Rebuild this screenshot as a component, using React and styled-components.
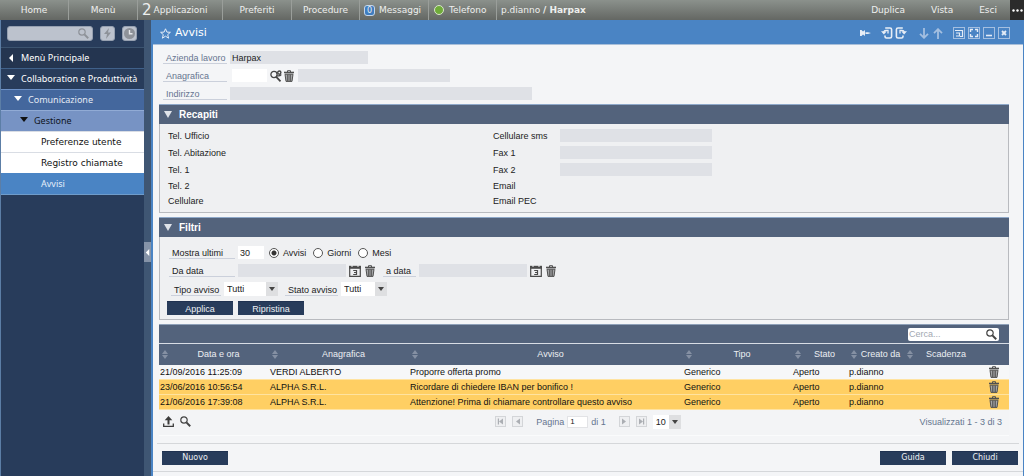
import React from 'react';
import styled, { createGlobalStyle } from 'styled-components';

const GlobalStyle = createGlobalStyle`
  *, *::before, *::after { box-sizing: border-box; }
  body {
    margin: 0;
    background: #3f5673;
    font-family: "Liberation Sans", Arial, sans-serif;
    font-size: 9px;
    line-height: 12px;
    color: #222;
  }
  button, input, select { font: inherit; color: inherit; margin: 0; border-radius: 0; }
  button { padding: 0; border: 0; background: none; cursor: pointer; }
  a { color: inherit; text-decoration: none; }
  svg { display: block; flex: none; }
`;

const ui = '"DejaVu Sans", Verdana, sans-serif';
const uiNarrow = '"Noto Sans", "Open Sans", sans-serif';

const Page = styled.div`
  min-height: 100vh;
  display: flex;
  flex-direction: column;
`;

/* ---------- top bar ---------- */
const TopBar = styled.nav`
  display: flex;
  height: 20px;
  font-family: ${ui};
  color: #eeefee;
  background: linear-gradient(#8b918c, #646763);
`;
const TopItem = styled.a`
  display: flex;
  align-items: center;
  justify-content: ${(p) => (p.$start ? 'flex-start' : 'center')};
  gap: ${(p) => p.$gap || 4}px;
  width: ${(p) => p.$width || 69}px;
  padding: 0 4px;
  border-right: 1px solid #9a9e9a;
  white-space: nowrap;
`;
const TopAction = styled.a`
  display: flex;
  align-items: center;
  padding: 0 13px;
`;
const User = styled.span`
  flex: 1;
  padding: 4px;
  white-space: nowrap;
`;
const Count = styled.span`
  font-size: 15px;
  line-height: 20px;
`;
const Badge = styled.span`
  width: 11px;
  height: 11px;
  border: 1px solid #c4d6ea;
  border-radius: 3px;
  background: #3f7dc0;
  font-size: 8px;
  line-height: 9px;
  text-align: center;
`;
const Led = styled.span`
  width: 10px;
  height: 10px;
  margin: 0 1px;
  border: 1px solid #d9e6c9;
  border-radius: 50%;
  background: #70ab3a;
`;
const More = styled.button`
  width: 14px;
  display: grid;
  place-items: center;
  background: #2b2b2b;
`;

/* ---------- side menu ---------- */
const Main = styled.div`
  flex: 1;
  display: flex;
`;
const Sidebar = styled.aside`
  width: 144px;
  flex: none;
  border-left: 1px solid #5c7ea6;
  background: #283c5b;
`;
const SideTools = styled.div`
  display: flex;
  align-items: center;
  gap: 7px;
  height: 27px;
  padding: 0 6px;
`;
const SideSearch = styled.label`
  display: flex;
  align-items: center;
  width: 86px;
  height: 15px;
  padding-right: 3px;
  border: 1px solid #96a0b0;
  border-radius: 3px;
  background: #bcc2cd;
  input {
    flex: 1;
    min-width: 0;
    height: 12px;
    border: 0;
    background: none;
    outline: 0;
  }
`;
const SideButton = styled.button`
  display: grid;
  place-items: center;
  width: 15px;
  height: 15px;
  border: 1px solid #96a0b0;
  border-radius: 3px;
  background: #bcc2cd;
`;
const levels = {
  root: 'color:#fff;background:#243550;border-color:#3c5470;padding-left:6px;',
  area: 'color:#fff;background:#283c5b;border-color:#40618a;padding-left:6px;',
  group: 'color:#e4ebf5;background:#44679d;border-color:#6d91c6;padding-left:13px;',
  folder: 'color:#10151d;background:#7793c4;border-color:#91abd5;padding-left:19px;',
  leaf: `color:#111;background:#fff;border-color:#d9dde4;padding-left:40px;font-family:${ui};`,
  active: `color:#e4eefa;background:#4a84c4;border-color:#4a84c4;padding-left:40px;`,
};
const MenuItem = styled.a`
  display: flex;
  align-items: center;
  gap: 6px;
  height: 21px;
  border-top: 1px solid;
  font-family: ${uiNarrow};
  white-space: nowrap;
  ${(p) => levels[p.$level]}
`;
const MenuArrow = styled.span`
  padding-bottom: 3px;
`;
const MenuEnd = styled.div`
  height: 1px;
  background: #6f9ccb;
`;
const Splitter = styled.div`
  width: 7px;
  flex: none;
  display: flex;
  align-items: center;
  padding-top: 8px;
  background: #3f5673;
`;
const Collapse = styled.button`
  width: 7px;
  height: 20px;
  display: grid;
  place-items: center;
  background: #8593a8;
`;

/* ---------- window ---------- */
const Window = styled.main`
  flex: 1;
  min-width: 0;
  display: flex;
  flex-direction: column;
  border: solid #4a84c4;
  border-width: 0 1px 0 2px;
  background: #f4f5f7;
`;
const TitleBar = styled.header`
  display: flex;
  align-items: center;
  height: 25px;
  padding: 2px 13px 0 7px;
  border-bottom: 1px solid #a9bfd9;
  background: #4a84c4;
  color: #fff;
`;
const Title = styled.h1`
  flex: 1;
  margin: 0 0 0 4px;
  font: 11px/16px ${ui};
`;
const WindowTools = styled.div`
  display: flex;
  align-items: center;
  gap: ${(p) => p.$gap}px;
  margin-left: ${(p) => p.$before || 0}px;
`;
const Content = styled.div`
  flex: 1;
  padding: 6px 14px 0 6px;
`;

const Heading = styled.section`
  display: flex;
  flex-direction: column;
  gap: 5px;
  padding-left: 4px;
  color: #65748f;
`;
const Row = styled.div`
  display: flex;
  align-items: center;
  gap: ${(p) => p.$gap || 3}px;
  padding-left: ${(p) => p.$indent || 0}px;
`;
const Group = styled(Row)`
  margin-left: ${(p) => p.$before}px;
`;
const Label = styled.label`
  width: ${(p) => p.$width || 64}px;
  height: 13px;
  padding: 1px 0 0 3px;
  border-bottom: 1px solid #cbd0db;
  white-space: nowrap;
`;
const Field = styled.input`
  && { margin-left: ${(p) => p.$before || 0}px; }
  width: ${(p) => p.$width}px;
  height: 13px;
  padding: 0 2px;
  border: 0;
  background: ${(p) => (p.readOnly ? '#dfe1e6' : '#fff')};
  color: #222;
  outline: 0;
`;
const IconButton = styled.button`
  display: grid;
  place-items: center;
  width: 12px;
  height: 13px;
`;

const Panel = styled.section`
  margin-top: 4px;
  border: 1px solid #b8babf;
  background: #eff0f2;
`;
const PanelTitle = styled.h2`
  display: flex;
  align-items: center;
  gap: 7px;
  height: 20px;
  margin: -1px -1px 0;
  padding-left: 5px;
  border-top: 1px solid #8ea8c9;
  background: #53637c;
  color: #fff;
  font: bold 10px/12px "Liberation Sans", Arial, sans-serif;
`;
const Contacts = styled.div`
  display: grid;
  grid-template-columns: 325px 1fr;
  padding: 3px 8px 4px;
`;
const ContactRow = styled.div`
  display: flex;
  align-items: center;
  height: ${(p) => (p.$short ? 15 : 17)}px;
  label, span { width: 67px; }
`;
const Filters = styled.form`
  display: flex;
  flex-direction: column;
  gap: 5px;
  padding: 9px 7px 4px;
`;
const Choice = styled.label`
  display: flex;
  align-items: center;
  gap: 4px;
  margin: 0 2px;
  input {
    appearance: none;
    width: 10px;
    height: 10px;
    border: 1px solid #555;
    border-radius: 50%;
    background: #fff;
  }
  input:checked { background: radial-gradient(#333 0 2px, #fff 3px); }
`;
const SelectBox = styled.span`
  display: inline-grid;
  width: ${(p) => p.$width}px;
  height: 14px;
  background: #fff;
  color: #222;
  > * { grid-area: 1 / 1; }
  select {
    appearance: none;
    width: 100%;
    height: 14px;
    padding: 0 3px;
    border: 0;
    background: none;
    outline: 0;
  }
`;
const SelectArrow = styled.span`
  justify-self: end;
  display: grid;
  place-items: center;
  width: 12px;
  height: 14px;
  background: #dedfe1;
  pointer-events: none;
`;
const Button = styled.button`
  width: 66px;
  height: 14px;
  border-top: 1px solid #1f3150;
  background: #283c5b;
  color: #edf0f4;
  font-family: ${(p) => (p.$wide ? ui : 'inherit')};
  font-size: ${(p) => (p.$wide ? 8 : 9)}px;
  line-height: 12px;
`;

/* ---------- list ---------- */
const ListBar = styled.div`
  display: flex;
  justify-content: flex-end;
  align-items: center;
  height: 19px;
  margin-top: 4px;
  padding: 0 10px;
  border-top: 1px solid #8ea0b8;
  background: #53637c;
`;
const ListSearch = styled.label`
  display: flex;
  align-items: center;
  width: 91px;
  height: 13px;
  padding-right: 2px;
  border-radius: 2px;
  background: #fff;
  input {
    flex: 1;
    min-width: 0;
    height: 13px;
    padding: 0 1px;
    border: 0;
    background: none;
    outline: 0;
  }
  input::placeholder { color: #a2a8b2; }
`;
const Table = styled.table`
  width: 100%;
  table-layout: fixed;
  border-collapse: collapse;
  th {
    height: 21px;
    padding: 0 0 0 3px;
    border-top: 1px solid #d8dde5;
    background: #53637c;
    color: #eceff3;
    font-weight: normal;
  }
  td {
    height: 15px;
    padding: 0 1px;
    border-bottom: 1px solid #ffe3a0;
    line-height: 14px;
    white-space: nowrap;
    overflow: hidden;
  }
  td button { width: 27px; height: 12px; }
`;
const ListRow = styled.tr`
  background: ${(p) => (p.$unread ? '#ffcf63' : '#f6f7f8')};
  color: #111;
`;
const Head = styled.div`
  display: flex;
  align-items: center;
  span { flex: 1; text-align: center; }
`;
const Pager = styled.div`
  display: grid;
  grid-template-columns: 1fr auto 1fr;
  height: 26px;
  padding: 0 7px 2px 3px;
  color: #65748f;
  background: #f3f4f6;
  border-bottom: 1px solid #fafbfc;
`;
const PageButton = styled.button`
  display: grid;
  place-items: center;
  width: 11px;
  height: 11px;
  border: 1px solid #d3d5d8;
  background: #eeeff1;
`;
const PageText = styled.label`
  display: flex;
  align-items: center;
  gap: 3px;
  margin: 0 7px;
  input {
    width: 21px;
    height: 12px;
    padding: 0 2px;
    border: 1px solid #e2e3e6;
    background: #fff;
    color: #222;
    font-size: 8px;
  }
`;
const Summary = styled.span`
  justify-self: end;
  align-self: center;
`;
const Footer = styled.footer`
  display: flex;
  gap: 6px;
  align-items: center;
  height: 28px;
  margin: 0 4px;
  padding: 0 1px 0 5px;
  border-top: 1px solid #d5d7da;
`;
const Spacer = styled.span`
  flex: 1;
`;
const Bottom = styled.div`
  height: 5px;
  border-top: 1px solid #d5d7da;
`;

/* ---------- icons ---------- */
const Icon = ({ w = 12, h = w, box = `0 0 ${w} ${h}`, color, children, ...rest }) => (
  <svg width={w} height={h} viewBox={box} fill="none" color={color} stroke="currentColor" aria-hidden="true" {...rest}>
    {children}
  </svg>
);
const Down = ({ color = '#fff', w = 8, h = 5 }) => (
  <Icon w={w} h={h} stroke="none"><path d={`M0 0H${w}L${w / 2} ${h}Z`} fill={color} /></Icon>
);
const Left = ({ w = 8, h = 8 }) => (
  <Icon w={w} h={h} box="0 0 8 8" stroke="none"><path d="M6 0V8L2 4Z" fill="#fff" /></Icon>
);
const Lens = ({ color = '#444', w = 11 }) => (
  <Icon w={w} box="0 0 11 11" color={color}>
    <circle cx="4" cy="4" r="3.2" strokeWidth="1.2" />
    <path d="M6.4 6.4L10.2 10.2" strokeWidth="2" />
  </Icon>
);
const Trash = () => (
  <Icon w={10} h={12} color="#505050">
    <path d="M0 2.5H10" strokeWidth="1.6" />
    <path d="M3.5 2V.7H6.5V2" />
    <path d="M1 4.2L2 11.400H8L9 4.200Z" fill="#a5a6a8" />
    <path d="M3.500 4.500V11M5 4.500V11M6.500 4.500V11" strokeWidth=".8" />
  </Icon>
);
const PersonLens = () => (
  <Icon w={12} color="#444">
    <circle cx="4" cy="4.500" r="3.100" strokeWidth="1.300" />
    <path d="M6 6.700L10.500 11.300" strokeWidth="1.800" />
    <circle cx="9.300" cy="2.600" r="1.600" strokeWidth="1.400" />
    <path d="M7.200 5.700Q9.500 6.500 11.300 4.500" strokeWidth="1.300" />
  </Icon>
);
const Calendar = () => (
  <Icon w={12} color="#4b4b4b">
    <path d="M.7 1.500V11.300H11.300V1.500" strokeWidth="1.200" />
    <path d="M0 2.300H12" strokeWidth="3" />
    <path d="M3 0V2M9 0V2" stroke="#eff0f2" />
    <path d="M4.200 5.500H7.500V9.500H4.200M5 7.500H7.500" strokeWidth="1.200" />
  </Icon>
);
const Sorter = () => (
  <Icon w={6} h={9} stroke="none">
    <path d="M3 0L6 4H0ZM3 9L0 5H6Z" fill="#8590a3" />
  </Icon>
);
const Star = () => (
  <Icon w={11} color="#e3ecf7" strokeLinejoin="round">
    <path d="M5.500 .800L6.900 4.100L10.400 4.300L7.700 6.600L8.600 10.200L5.500 8.200L2.400 10.200L3.300 6.600L.600 4.300L4.100 4.100Z" />
  </Icon>
);
const Pin = () => (
  <Icon w={12} h={8} stroke="none">
    <path d="M1 1H2.500L4 2.500L6 1V7L4 5.500L2.500 7H1ZM6.500 3.200H9L12 4L9 4.900H6.500Z" fill="#e8eef6" />
  </Icon>
);
const Turn = ({ flip }) => (
  <Icon w={12} h={12} color="#e8eef6">
    <g transform={flip ? 'translate(12 0) scale(-1 1)' : undefined}>
      <path
        d="M4.200 1H9Q10.600 1 10.600 2.500V9.500Q10.600 11 9 11H5.500Q4 11 4 9.500V8.500"
        strokeWidth="1.600"
      />
      <path d="M2.800 5Q3 3.300 5 3.300H7V6.500" strokeWidth="1.300" />
      <path d="M0 4.200H5.800L2.900 7.600Z" fill="currentColor" stroke="none" />
    </g>
  </Icon>
);
const Arrow = ({ up }) => (
  <Icon w={10} h={11} color="#a4bfe0" strokeWidth="1.800">
    <path d={up ? 'M5 11V1.500M1 5.200L5 1.200L9 5.200' : 'M5 0V9.500M1 5.800L5 9.800L9 5.800'} />
  </Icon>
);
const Frame = ({ children }) => (
  <Icon w={12} color="#e3ecf7">
    <rect x=".5" y=".5" width="11" height="11" stroke="#a4bfe0" />
    {children}
  </Icon>
);
const Upload = () => (
  <Icon w={11} color="#3c3c3c">
    <path d="M5.500 8.500V3" strokeWidth="2" />
    <path d="M5.500 0L9.300 4.200H1.700Z" fill="currentColor" stroke="none" />
    <path d="M.7 7.500V10.300H10.300V7.500" strokeWidth="1.300" />
  </Icon>
);
const PageArrow = ({ left, bar }) => (
  <Icon w={7} stroke="none">
    <g fill="#abaeb3" transform={left ? 'translate(7 0) scale(-1 1)' : undefined}>
      <path d="M1 0.500L5 3.500L1 6.500Z" />
      {bar && <path d="M5 .500H6.200V6.500H5Z" />}
    </g>
  </Icon>
);

const Select = ({ width, id, value, label }) => (
  <SelectBox $width={width}>
    <select id={id} aria-label={label} defaultValue={value}><option>{value}</option></select>
    <SelectArrow><Down color="#444" w={6} h={4} /></SelectArrow>
  </SelectBox>
);

const menu = [
  ['root', 'Menù Principale', <Left />],
  ['area', 'Collaboration e Produttività', <MenuArrow><Down /></MenuArrow>],
  ['group', 'Comunicazione', <MenuArrow><Down /></MenuArrow>],
  ['folder', 'Gestione', <MenuArrow><Down color="#111" /></MenuArrow>],
  ['leaf', 'Preferenze utente'],
  ['leaf', 'Registro chiamate'],
  ['active', 'Avvisi'],
];
const contactsLeft = ['Tel. Ufficio', 'Tel. Abitazione', 'Tel. 1', 'Tel. 2', 'Cellulare'];
const contactsRight = ['Cellulare sms', 'Fax 1', 'Fax 2', 'Email', 'Email PEC'];
const columns = [
  ['Data e ora', 110], ['Anagrafica', 140], ['Avviso'], ['Tipo', 109],
  ['Stato', 56], ['Creato da', 56], ['Scadenza', 75],
];
const notices = [
  ['21/09/2016 11:25:09', 'VERDI ALBERTO', 'Proporre offerta promo', false],
  ['23/06/2016 10:56:54', 'ALPHA S.R.L.', 'Ricordare di chiedere IBAN per bonifico !', true],
  ['21/06/2016 17:39:08', 'ALPHA S.R.L.', 'Attenzione! Prima di chiamare controllare questo avviso', true],
];

export default function App() {
  return (
    <Page>
      <GlobalStyle />
      <TopBar>
        <TopItem href="#">Home</TopItem>
        <TopItem href="#">Menù</TopItem>
        <TopItem href="#" $width={85} $gap={2} $start><Count>2</Count>Applicazioni</TopItem>
        <TopItem href="#">Preferiti</TopItem>
        <TopItem href="#" $width={68}>Procedure</TopItem>
        <TopItem href="#" $start><Badge>0</Badge>Messaggi</TopItem>
        <TopItem href="#" $width={68} $start><Led />Telefono</TopItem>
        <User>p.dianno <b>/ Harpax</b></User>
        <TopAction href="#">Duplica</TopAction>
        <TopAction href="#">Vista</TopAction>
        <TopAction href="#">Esci</TopAction>
        <More aria-label="Altro">
          <Icon w={11} h={3} stroke="none">
            <g fill="#fff"><circle cx="1.500" cy="1.500" r="1.200" /><circle cx="5.500" cy="1.500" r="1.200" /><circle cx="9.500" cy="1.500" r="1.200" /></g>
          </Icon>
        </More>
      </TopBar>

      <Main>
        <Sidebar>
          <SideTools>
            <SideSearch><input aria-label="Cerca nel menù" /><Lens color="#8e9299" /></SideSearch>
            <SideButton aria-label="Rapidi">
              <Icon w={9} h={11} stroke="none"><path d="M6 0L1 6H4L3 11L8 4.500H5Z" fill="#8e9299" /></Icon>
            </SideButton>
            <SideButton aria-label="Recenti">
              <Icon w={11}>
                <circle cx="5.500" cy="5.500" r="5.500" fill="#8e9299" stroke="none" />
                <path d="M5.500 2V5.800H8.500" stroke="#e4e6ea" strokeWidth="1.400" />
              </Icon>
            </SideButton>
          </SideTools>
          {menu.map(([level, text, icon]) => (
            <MenuItem key={text} href="#" $level={level}>{icon}{text}</MenuItem>
          ))}
          <MenuEnd />
        </Sidebar>
        <Splitter><Collapse aria-label="Comprimi menù"><Left w={7} h={7} /></Collapse></Splitter>

        <Window>
          <TitleBar>
            <Star />
            <Title>Avvisi</Title>
            <WindowTools $gap={2}><IconButton aria-label="Fissa"><Pin /></IconButton></WindowTools>
            <WindowTools $gap={2} $before={10}>
              <IconButton aria-label="Indietro"><Turn /></IconButton>
              <IconButton aria-label="Avanti"><Turn flip /></IconButton>
            </WindowTools>
            <WindowTools $gap={2} $before={11}>
              <IconButton aria-label="Successivo"><Arrow /></IconButton>
              <IconButton aria-label="Precedente"><Arrow up /></IconButton>
            </WindowTools>
            <WindowTools $gap={3} $before={9}>
              <IconButton aria-label="Ripristina finestra">
                <Frame><path d="M2 3.500H9.500V9.500H7M3 6H6.500V9H3" strokeWidth="1.200" /></Frame>
              </IconButton>
              <IconButton aria-label="Schermo intero">
                <Frame><path d="M2.500 5V2.500H5M7 2.500H9.500V5M9.500 7V9.500H7M5 9.500H2.500V7" strokeWidth="1.400" /></Frame>
              </IconButton>
              <IconButton aria-label="Riduci"><Frame><path d="M3 8.500H9" strokeWidth="1.600" /></Frame></IconButton>
              <IconButton aria-label="Chiudi finestra">
                <Frame><path d="M4 4L8 8M8 4L4 8" strokeWidth="1.800" /></Frame>
              </IconButton>
            </WindowTools>
          </TitleBar>

          <Content>
            <Heading>
              <Row>
                <Label htmlFor="company">Azienda lavoro</Label>
                <Field id="company" $width={138} readOnly defaultValue="Harpax" />
              </Row>
              <Row>
                <Label htmlFor="person">Anagrafica</Label>
                <Field id="person" $width={35} $before={2} />
                <Row $gap={1}>
                  <IconButton aria-label="Cerca anagrafica"><PersonLens /></IconButton>
                  <IconButton aria-label="Svuota anagrafica"><Trash /></IconButton>
                </Row>
                <Field aria-label="Nome anagrafica" $width={152} readOnly />
              </Row>
              <Row>
                <Label htmlFor="address">Indirizzo</Label>
                <Field id="address" $width={302} readOnly />
              </Row>
            </Heading>

            <Panel>
              <PanelTitle><Down color="#dfe3e9" h={7} />Recapiti</PanelTitle>
              <Contacts>
                <div>
                  {contactsLeft.map((t, i) => (
                    <ContactRow key={t} $short={i > 2}><span>{t}</span></ContactRow>
                  ))}
                </div>
                <div>
                  {contactsRight.map((t, i) => (
                    <ContactRow key={t} $short={i > 2}>
                      {i < 3 ? <label htmlFor={`contact${i}`}>{t}</label> : <span>{t}</span>}
                      {i < 3 && <Field id={`contact${i}`} $width={152} readOnly />}
                    </ContactRow>
                  ))}
                </div>
              </Contacts>
            </Panel>

            <Panel>
              <PanelTitle><Down color="#dfe3e9" h={7} />Filtri</PanelTitle>
              <Filters onSubmit={(e) => e.preventDefault()}>
                <Row $indent={2}>
                  <Label $width={66} htmlFor="last">Mostra ultimi</Label>
                  <Field id="last" $width={26} defaultValue="30" />
                  <Choice><input type="radio" name="unit" defaultChecked />Avvisi</Choice>
                  <Choice><input type="radio" name="unit" />Giorni</Choice>
                  <Choice><input type="radio" name="unit" />Mesi</Choice>
                </Row>
                <Row $indent={2}>
                  <Label $width={66} htmlFor="from">Da data</Label>
                  <Field id="from" $width={108} readOnly />
                  <IconButton aria-label="Scegli data iniziale"><Calendar /></IconButton>
                  <IconButton aria-label="Svuota data iniziale"><Trash /></IconButton>
                  <Group $before={4}>
                    <Label $width={33} htmlFor="to">a data</Label>
                    <Field id="to" $width={108} readOnly />
                    <IconButton aria-label="Scegli data finale"><Calendar /></IconButton>
                    <IconButton aria-label="Svuota data finale"><Trash /></IconButton>
                  </Group>
                </Row>
                <Row $indent={4}>
                  <Label $width={50} htmlFor="type">Tipo avviso</Label>
                  <Select id="type" width={54} value="Tutti" />
                  <Group $before={4}>
                    <Label $width={53} htmlFor="state">Stato avviso</Label>
                    <Select id="state" width={46} value="Tutti" />
                  </Group>
                </Row>
                <Row $gap={5}>
                  <Button>Applica</Button>
                  <Button type="reset">Ripristina</Button>
                </Row>
              </Filters>
            </Panel>

            <ListBar>
              <ListSearch><input aria-label="Cerca negli avvisi" placeholder="Cerca..." /><Lens /></ListSearch>
            </ListBar>
            <Table>
              <colgroup>
                {columns.map(([t, w]) => <col key={t} width={w} />)}
                <col width="30" />
              </colgroup>
              <thead>
                <tr>
                  {columns.map(([t]) => <th key={t}><Head><Sorter /><span>{t}</span></Head></th>)}
                  <th aria-label="Azioni" />
                </tr>
              </thead>
              <tbody>
                {notices.map(([date, name, text, unread]) => (
                  <ListRow key={date} $unread={unread}>
                    <td>{date}</td><td>{name}</td><td>{text}</td><td>Generico</td>
                    <td>Aperto</td><td>p.dianno</td><td />
                    <td><IconButton aria-label="Elimina avviso"><Trash /></IconButton></td>
                  </ListRow>
                ))}
              </tbody>
            </Table>
            <Pager>
              <Row $gap={5}>
                <IconButton aria-label="Esporta"><Upload /></IconButton>
                <IconButton aria-label="Trova"><Lens /></IconButton>
              </Row>
              <Group $gap={6} $before={12}>
                <PageButton aria-label="Prima pagina"><PageArrow left bar /></PageButton>
                <PageButton aria-label="Pagina precedente"><PageArrow left /></PageButton>
                <PageText>Pagina <input defaultValue="1" /> di 1</PageText>
                <PageButton aria-label="Pagina successiva"><PageArrow /></PageButton>
                <PageButton aria-label="Ultima pagina"><PageArrow bar /></PageButton>
                <Select label="Righe per pagina" width={28} value="10" />
              </Group>
              <Summary>Visualizzati 1 - 3 di 3</Summary>
            </Pager>
          </Content>
          <Footer>
            <Button $wide>Nuovo</Button>
            <Spacer />
            <Button $wide>Guida</Button>
            <Button $wide>Chiudi</Button>
          </Footer>
          <Bottom />
        </Window>
      </Main>
    </Page>
  );
}
